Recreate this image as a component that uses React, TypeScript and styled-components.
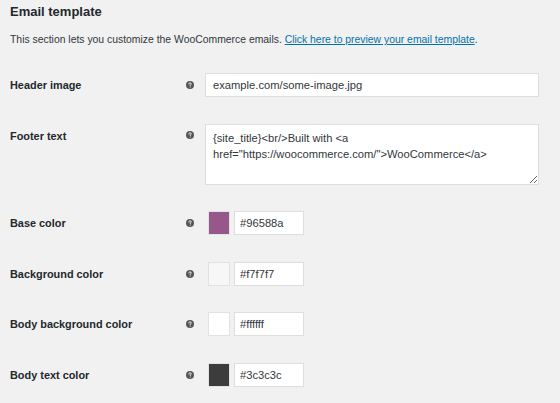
import { Fragment } from "react";
import { createGlobalStyle, styled } from "styled-components";

const Global = createGlobalStyle`
  html, body {
    margin: 0;
    padding: 0;
    background: #f1f1f1;
  }
  body {
    font-family: "Liberation Sans", Arial, sans-serif;
    color: #23282d;
  }
`;

const Page = styled.div`
  padding: 4px 21px 0 10px;
`;

const Title = styled.h2`
  margin: 0;
  font-size: 13px;
  line-height: 16px;
  font-weight: 700;
  color: #23282d;
`;

const Intro = styled.p`
  margin: 13px 0 0;
  font-size: 10.4px;
  line-height: 14px;
  color: #32373c;

  a {
    color: #0073aa;
    text-decoration: underline;
  }
`;

const Form = styled.div`
  display: grid;
  grid-template-columns: 176px 19px 1fr;
  row-gap: 26.6px;
  margin-top: 26px;
`;

const Label = styled.div<{ $top?: boolean }>`
  font-size: 10.9px;
  font-weight: 700;
  color: #23282d;
  display: flex;
  align-items: ${(p) => (p.$top ? "flex-start" : "center")};
  padding-top: ${(p) => (p.$top ? "6px" : "0")};
`;

const HelpCell = styled.div<{ $top?: boolean }>`
  display: flex;
  align-items: ${(p) => (p.$top ? "flex-start" : "center")};
  padding-top: ${(p) => (p.$top ? "7px" : "0")};
`;

const TextInput = styled.input`
  box-sizing: border-box;
  height: 24px;
  width: 100%;
  margin: 0;
  padding: 0 7px;
  border: 1px solid #dedede;
  background: #fff;
  font-family: "Liberation Sans", Arial, sans-serif;
  font-size: 11.2px;
  color: #32373c;
  outline: none;
`;

const TextArea = styled.textarea`
  box-sizing: border-box;
  display: block;
  height: 61px;
  width: 100%;
  margin: 0;
  padding: 5px 7px;
  border: 1px solid #dedede;
  background: #fff;
  font-family: "Liberation Sans", Arial, sans-serif;
  font-size: 11.2px;
  line-height: 16px;
  color: #32373c;
  outline: none;
`;

const ColorField = styled.div`
  display: flex;
  gap: 4px;
  padding-left: 3px;
`;

const Swatch = styled.div<{ $color: string }>`
  box-sizing: border-box;
  width: 22px;
  height: 24px;
  border: 1px solid #e2e2e2;
  background: ${(p) => p.$color};
`;

const HexInput = styled(TextInput)`
  width: 70px;
  padding: 0 5px;
`;

const HelpIcon = () => (
  <svg width="8" height="8" viewBox="0 0 16 16" aria-hidden="true">
    <circle cx="8" cy="8" r="8" fill="#555" />
    <path
      d="M5.6 6.1c0-1.5 1.1-2.4 2.5-2.4s2.4.9 2.4 2.1c0 1-.6 1.5-1.3 1.9-.5.3-.7.6-.7 1.1v.4"
      fill="none"
      stroke="#fff"
      strokeWidth="1.9"
      strokeLinecap="round"
    />
    <circle cx="8.5" cy="11.9" r="1.1" fill="#fff" />
  </svg>
);

const colors = [
  { label: "Base color", value: "#96588a" },
  { label: "Background color", value: "#f7f7f7" },
  { label: "Body background color", value: "#ffffff" },
  { label: "Body text color", value: "#3c3c3c" },
];

export default function App() {
  return (
    <>
      <Global />
      <Page>
        <Title>Email template</Title>
        <Intro>
          This section lets you customize the WooCommerce emails.{" "}
          <a href="#preview">Click here to preview your email template</a>.
        </Intro>
        <Form>
          <Label>Header image</Label>
          <HelpCell>
            <HelpIcon />
          </HelpCell>
          <TextInput readOnly value="example.com/some-image.jpg" />

          <Label $top>Footer text</Label>
          <HelpCell $top>
            <HelpIcon />
          </HelpCell>
          <TextArea
            readOnly
            value={'{site_title}<br/>Built with <a href="https://woocommerce.com/">WooCommerce</a>'}
          />

          {colors.map((c) => (
            <Fragment key={c.label}>
              <Label>{c.label}</Label>
              <HelpCell>
                <HelpIcon />
              </HelpCell>
              <ColorField>
                <Swatch $color={c.value} />
                <HexInput readOnly value={c.value} />
              </ColorField>
            </Fragment>
          ))}
        </Form>
      </Page>
    </>
  );
}
